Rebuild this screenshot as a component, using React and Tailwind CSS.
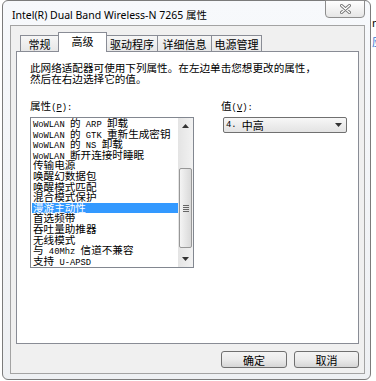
import React from "react";

// list entries of the advanced tab
const items = [
  "WoWLAN 的 ARP 卸载",
  "WoWLAN 的 GTK 重新生成密钥",
  "WoWLAN 的 NS 卸载",
  "WoWLAN 断开连接时睡眠",
  "传输电源",
  "唤醒幻数据包",
  "唤醒模式匹配",
  "混合模式保护",
  "漫游主动性",
  "首选频带",
  "吞吐量助推器",
  "无线模式",
  "与 40Mhz 信道不兼容",
  "支持 U-APSD",
];

const tabs = [
  { label: "常规", w: "w-[39px]" },
  { label: "高级", w: "w-[49px]", active: true },
  { label: "驱动程序", w: "w-[52px]" },
  { label: "详细信息", w: "w-[55px]" },
  { label: "电源管理", w: "w-[51px]" },
];

// latin runs are half width, like SimSun
function Mixed({ text }) {
  const parts = text.split(/([\x20-\x7e]+)/).filter(Boolean);
  return parts.map((p, i) =>
    /^[\x20-\x7e]+$/.test(p) ? (
      <span key={i} className="font-['Liberation_Mono',monospace] text-[8.8px] whitespace-pre">
        {p}
      </span>
    ) : (
      <span key={i}>{p}</span>
    )
  );
}

function Arrow({ up }) {
  return (
    <svg width="7" height="4" viewBox="0 0 7 4">
      <path d={up ? "M0 4 L3.5 0 L7 4Z" : "M0 0 L3.5 4 L7 0Z"} fill="#333" />
    </svg>
  );
}

export default function App() {
  return (
    <div className="flex h-[381px] w-[376px] overflow-hidden bg-white pl-[2px] font-['Noto_Sans_CJK_SC',sans-serif] text-black">
      {/* window */}
      <div className="flex h-[380px] w-[369px] shrink-0 flex-col rounded-[6px] border border-[#7b7b7b] bg-linear-to-b from-[#f7f9fc] to-[#eef0f3]">
        {/* title bar */}
        <div className="flex h-[24px] items-start">
          <div className="pl-[9px] pt-[7px] font-['Noto_Sans',sans-serif] text-[10.5px] leading-[14px]">
            Intel(R) Dual Band Wireless-N 7265 <span className="font-['Noto_Sans_CJK_SC',sans-serif]">属性</span>
          </div>
          <div className="-mt-px mr-[5px] ml-auto flex h-[18px] w-[40px] items-center justify-center rounded-b-[4px] border border-[#8d8d8d] bg-linear-to-b from-[#ffffff] to-[#e6e6e6]">
            <svg width="11" height="10" viewBox="0 0 11 10">
              <path d="M1.5 1.5 L9.5 8.5 M9.5 1.5 L1.5 8.5" stroke="#777" strokeWidth="3" strokeLinecap="round" />
              <path d="M1.5 1.5 L9.5 8.5 M9.5 1.5 L1.5 8.5" stroke="#fff" strokeWidth="1.2" strokeLinecap="round" />
            </svg>
          </div>
        </div>

        {/* client area */}
        <div className="ml-[7px] flex h-[349px] w-[355px] flex-col border border-[#a3a3a3] bg-[#f0f0f0] px-[5px] pt-[6px]">
          {/* tabs */}
          <div className="relative z-10 flex h-[19px] items-end pl-[4px] text-[11px]">
            {tabs.map((t, i) =>
              t.active ? (
                <div
                  key={t.label}
                  className={`${t.w} -mb-px -ml-px flex h-[20px] items-start justify-center border border-b-0 border-[#898c95] bg-white pt-[1px] leading-[14px]`}
                >
                  {t.label}
                </div>
              ) : (
                <div
                  key={t.label}
                  className={`${t.w} ${i === 0 ? "" : "-ml-px"} flex h-[16px] items-center justify-center border border-b-0 border-[#898c95] bg-linear-to-b from-[#f6f6f6] to-[#e7e7e7] leading-[14px]`}
                >
                  {t.label}
                </div>
              )
            )}
          </div>

          {/* tab page */}
          <div className="h-[293px] border border-[#898c95] bg-white pl-[13px] pt-[10px] text-[10.6px] leading-[11px]">
            <p className="whitespace-nowrap">
              此网络适配器可使用下列属性。在左边单击您想更改的属性，
              <br />
              然后在右边选择它的值。
            </p>

            <div className="mt-[16px] flex">
              <div className="w-[164px]">
                <div className="h-[11px]">
                  属性<span className="font-['Liberation_Mono',monospace] text-[8.8px]">(<u>P</u>):</span>
                </div>
                <div className="mt-[6px] flex h-[151px] border border-[#828790]">
                  <div className="flex-1 pl-[1px]">
                    {items.map((it) => (
                      <div
                        key={it}
                        className={`h-[10.6px] whitespace-nowrap pl-[1px] leading-[10.6px] ${
                          it === "漫游主动性" ? "bg-[#3399ff] text-white" : ""
                        }`}
                      >
                        <Mixed text={it} />
                      </div>
                    ))}
                  </div>
                  {/* scrollbar */}
                  <div className="flex w-[15px] flex-col bg-linear-to-r from-[#e4e4e4] to-[#f2f2f2]">
                    <div className="flex h-[16px] items-center justify-center">
                      <Arrow up />
                    </div>
                    <div className="h-[34px]" />
                    <div className="mx-px flex h-[80px] flex-col items-center justify-center gap-[1px] rounded-[2px] border border-[#979797] bg-linear-to-r from-[#f4f4f4] to-[#d9d9d9]">
                      <div className="h-px w-[6px] bg-[#666]" />
                      <div className="h-px w-[6px] bg-[#666]" />
                      <div className="h-px w-[6px] bg-[#666]" />
                      <div className="h-px w-[6px] bg-[#666]" />
                    </div>
                    <div className="flex-1" />
                    <div className="flex h-[16px] items-center justify-center">
                      <Arrow />
                    </div>
                  </div>
                </div>
              </div>

              <div className="ml-[27px]">
                <div className="h-[11px]">
                  值<span className="font-['Liberation_Mono',monospace] text-[8.8px]">(<u>V</u>):</span>
                </div>
                <div className="mt-[6px] ml-[2px] flex h-[16px] w-[124px] items-center rounded-[2px] border border-[#707070] bg-linear-to-b from-[#f7f7f7] to-[#e3e3e3] pl-[2px] pr-[4px] text-[11px] leading-[14px]">
                  <Mixed text="4. 中高" />
                  <div className="ml-auto flex items-center">
                    <Arrow />
                  </div>
                </div>
              </div>
            </div>
          </div>

          {/* buttons */}
          <div className="mt-[7px] flex justify-end gap-[7px] text-[11px]">
            <button className="flex h-[17px] w-[66px] items-center justify-center rounded-[3px] border border-[#707070] bg-linear-to-b from-[#f4f4f4] via-[#ebebeb] to-[#d6d6d6] leading-[14px]">
              确定
            </button>
            <button className="flex h-[17px] w-[65px] items-center justify-center rounded-[3px] border border-[#707070] bg-linear-to-b from-[#f4f4f4] via-[#ebebeb] to-[#d6d6d6] leading-[14px]">
              取消
            </button>
          </div>
        </div>
      </div>

      {/* sliver of the window behind */}
      <div className="flex w-[5px] flex-col overflow-hidden pl-px pt-[16px] text-[11px] leading-[14px]">
        <span className="font-['Noto_Sans',sans-serif]">n</span>
        <span className="mt-[4px] text-[#2f74d0]">应</span>
      </div>
    </div>
  );
}
